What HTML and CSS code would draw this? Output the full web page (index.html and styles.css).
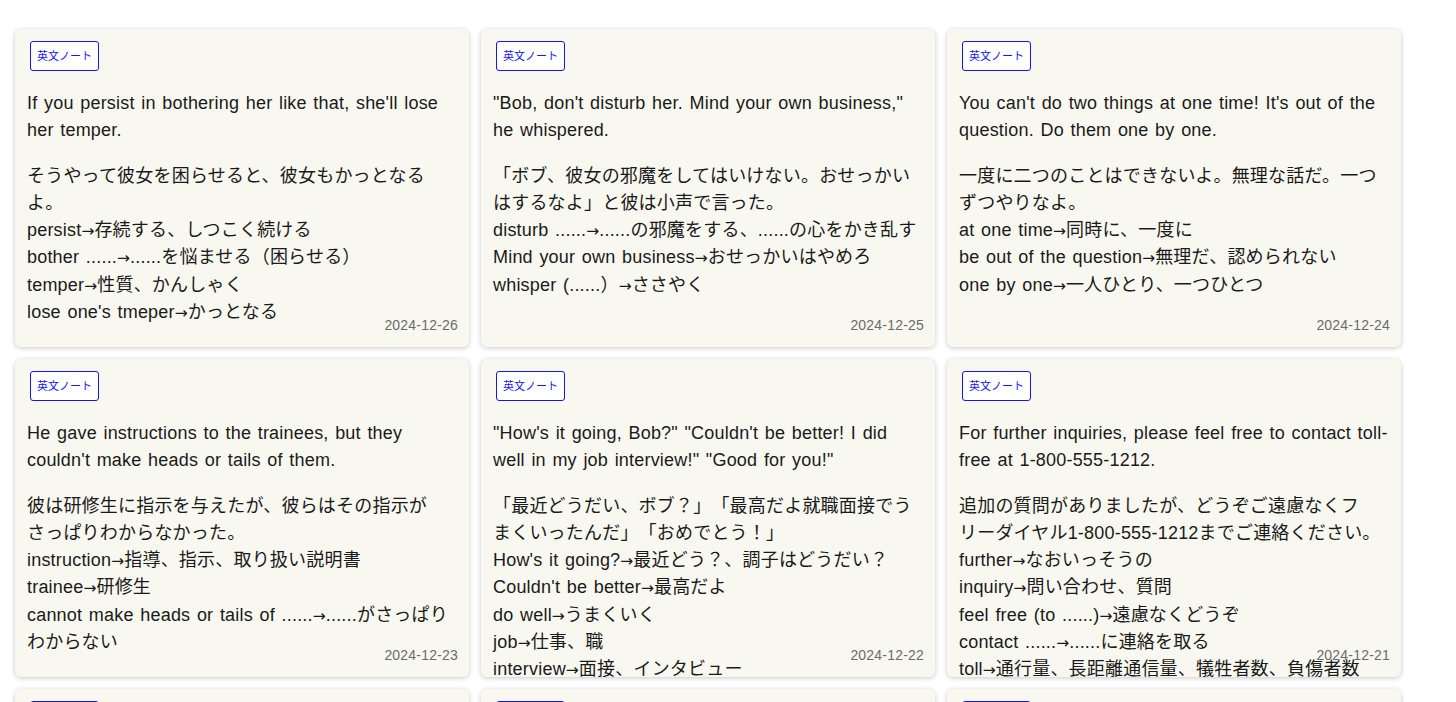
FILE: index.html
```html
<!DOCTYPE html>
<html lang="ja">
<head>
<meta charset="utf-8">
<title>英文ノート</title>
<link rel="stylesheet" href="styles.css">
</head>
<body>
<main class="grid">
  <article class="card">
    <span class="tag">英文ノート</span>
    <p class="en">If you persist in bothering her like that, she'll lose her temper.</p>
    <p class="ja">そうやって彼女を困らせると、彼女もかっとなるよ。<br>persist<span class="arrow">→</span>存続する、しつこく続ける<br>bother ......<span class="arrow">→</span>......を悩ませる（困らせる）<br>temper<span class="arrow">→</span>性質、かんしゃく<br>lose one's tmeper<span class="arrow">→</span>かっとなる</p>
    <time class="date">2024-12-26</time>
  </article>
  <article class="card">
    <span class="tag">英文ノート</span>
    <p class="en">"Bob, don't disturb her. Mind your own business," he whispered.</p>
    <p class="ja">「ボブ、彼女の邪魔をしてはいけない。おせっかいはするなよ」と彼は小声で言った。<br>disturb ......<span class="arrow">→</span>......の邪魔をする、......の心をかき乱す<br>Mind your own business<span class="arrow">→</span>おせっかいはやめろ<br>whisper (......）<span class="arrow">→</span>ささやく</p>
    <time class="date">2024-12-25</time>
  </article>
  <article class="card">
    <span class="tag">英文ノート</span>
    <p class="en">You can't do two things at one time! It's out of the question. Do them one by one.</p>
    <p class="ja">一度に二つのことはできないよ。無理な話だ。一つずつやりなよ。<br>at one time<span class="arrow">→</span>同時に、一度に<br>be out of the question<span class="arrow">→</span>無理だ、認められない<br>one by one<span class="arrow">→</span>一人ひとり、一つひとつ</p>
    <time class="date">2024-12-24</time>
  </article>
  <article class="card">
    <span class="tag">英文ノート</span>
    <p class="en">He gave instructions to the trainees, but they couldn't make heads or tails of them.</p>
    <p class="ja">彼は研修生に指示を与えたが、彼らはその指示がさっぱりわからなかった。<br>instruction<span class="arrow">→</span>指導、指示、取り扱い説明書<br>trainee<span class="arrow">→</span>研修生<br>cannot make heads or tails of ......<span class="arrow">→</span>......がさっぱりわからない</p>
    <time class="date">2024-12-23</time>
  </article>
  <article class="card">
    <span class="tag">英文ノート</span>
    <p class="en">"How's it going, Bob?" "Couldn't be better! I did well in my job interview!" "Good for you!"</p>
    <p class="ja">「最近どうだい、ボブ？」「最高だよ就職面接でうまくいったんだ」「おめでとう！」<br>How's it going?<span class="arrow">→</span>最近どう？、調子はどうだい？<br>Couldn't be better<span class="arrow">→</span>最高だよ<br>do well<span class="arrow">→</span>うまくいく<br>job<span class="arrow">→</span>仕事、職<br>interview<span class="arrow">→</span>面接、インタビュー</p>
    <time class="date">2024-12-22</time>
  </article>
  <article class="card">
    <span class="tag">英文ノート</span>
    <p class="en">For further inquiries, please feel free to contact toll-free at 1-800-555-1212.</p>
    <p class="ja">追加の質問がありましたが、どうぞご遠慮なくフリーダイヤル1-800-555-1212までご連絡ください。<br>further<span class="arrow">→</span>なおいっそうの<br>inquiry<span class="arrow">→</span>問い合わせ、質問<br>feel free (to ......)<span class="arrow">→</span>遠慮なくどうぞ<br>contact ......<span class="arrow">→</span>......に連絡を取る<br>toll<span class="arrow">→</span>通行量、長距離通信量、犠牲者数、負傷者数</p>
    <time class="date">2024-12-21</time>
  </article>
  <article class="card">
    <span class="tag">英文ノート</span>
    <p class="en">I'm looking forward to seeing you again.</p>
    <p class="ja">またお会いできるのを楽しみにしています。</p>
    <time class="date">2024-12-20</time>
  </article>
  <article class="card">
    <span class="tag">英文ノート</span>
    <p class="en">Take it easy. Everything will be fine.</p>
    <p class="ja">気楽にね。すべてうまくいくよ。</p>
    <time class="date">2024-12-19</time>
  </article>
  <article class="card">
    <span class="tag">英文ノート</span>
    <p class="en">It's up to you.</p>
    <p class="ja">あなた次第です。</p>
    <time class="date">2024-12-18</time>
  </article>
</main>
</body>
</html>
```

FILE: styles.css
```css
html, body {
  margin: 0;
  padding: 0;
  background: #ffffff;
}

body {
  font-family: "Liberation Sans", "Noto Sans CJK JP", sans-serif;
  color: #1a1a1a;
}

.grid {
  display: grid;
  grid-template-columns: repeat(3, 454px);
  grid-auto-rows: 318px;
  gap: 12px;
  padding: 29px 0 0 15px;
}

.card {
  position: relative;
  overflow: hidden;
  box-sizing: border-box;
  padding: 12px 12px 0 12px;
  background: #f9f8f0;
  border-radius: 6px;
  box-shadow: 0 1px 5px rgba(0, 0, 0, 0.22);
}

.tag {
  display: block;
  width: max-content;
  box-sizing: border-box;
  height: 30px;
  margin-left: 3px;
  padding: 0 6px;
  border: 1.5px solid #1414ff;
  border-radius: 3px;
  background: #ffffff;
  color: #1414ff;
  font-size: 11px;
  line-height: 27px;
  font-family: "Noto Sans CJK JP", sans-serif;
}

.en, .ja {
  font-size: 18px;
  line-height: 27.3px;
  letter-spacing: 0.2px;
  word-spacing: 1.4px;
  text-spacing-trim: space-all;
  line-break: strict;
}

.en {
  margin: 19px 0 0 0;
}

.ja {
  margin: 18px 0 0 0;
}

.arrow {
  font-family: "DejaVu Sans", sans-serif;
  font-size: 15.5px;
  line-height: 10px;
  letter-spacing: 0;
}

.date {
  position: absolute;
  right: 11px;
  bottom: 12px;
  font-size: 14px;
  line-height: 20px;
  letter-spacing: 0.2px;
  color: #6b6b6b;
}
```
